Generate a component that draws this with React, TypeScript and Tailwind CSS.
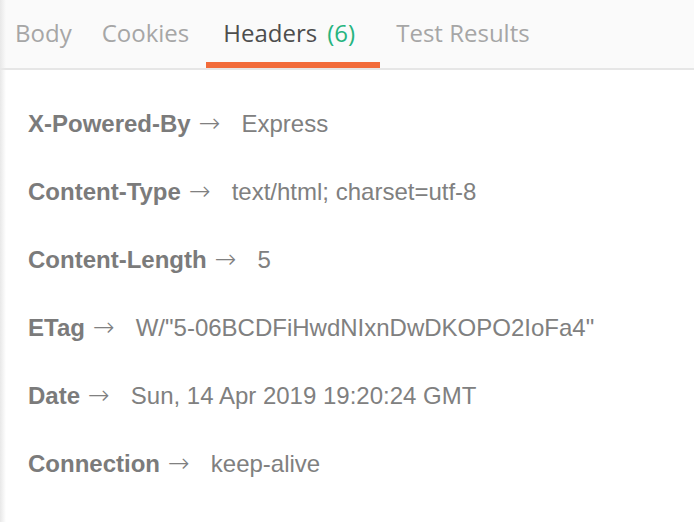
import React from "react";

const headers: [string, string][] = [
  ["X-Powered-By", "Express"],
  ["Content-Type", "text/html; charset=utf-8"],
  ["Content-Length", "5"],
  ["ETag", 'W/"5-06BCDFiHwdNIxnDwDKOPO2IoFa4"'],
  ["Date", "Sun, 14 Apr 2019 19:20:24 GMT"],
  ["Connection", "keep-alive"],
];

export default function App() {
  return (
    <div className="w-[694px] h-[522px] bg-white relative overflow-hidden">
      <div className="flex h-[70px] bg-[#fafafa] border-b-2 border-[#e6e6e6] text-[24px] leading-[32px] text-[#a6a6a6] [font-family:'Open_Sans',sans-serif]">
        <div className="pl-[15px] pt-[17px]">Body</div>
        <div className="ml-[30px] pt-[17px]">Cookies</div>
        <div className="ml-[17px] w-[174px] pl-[17px] pt-[17px] relative">
          <span className="text-[#4d4d4d]">Headers</span>
          <span className="ml-[10px] text-[#26b47f]">(6)</span>
          <div className="absolute left-0 right-0 bottom-0 h-[6px] bg-[#f26b3a]" />
        </div>
        <div className="ml-[16px] pt-[17px]">Test Results</div>
      </div>
      <div className="flex flex-col gap-[40px] pt-[39px] pl-[28px] text-[24px] leading-[28px] text-[#808080] [font-family:'Liberation_Sans',Arial,sans-serif]">
        {headers.map(([k, v]) => (
          <div key={k} className="h-[28px] whitespace-nowrap flex items-baseline">
            <span className="font-bold text-[#7b7b7b]">{k}</span>
            <span className="ml-[8px] text-[26px] leading-[28px] [font-family:'DejaVu_Sans',sans-serif] font-light">→</span>
            <span className="ml-[21px]">{v}</span>
          </div>
        ))}
      </div>
      <div className="absolute left-0 top-0 bottom-0 w-[6px] bg-gradient-to-r from-[#e8e8e8] to-transparent pointer-events-none" />
    </div>
  );
}
